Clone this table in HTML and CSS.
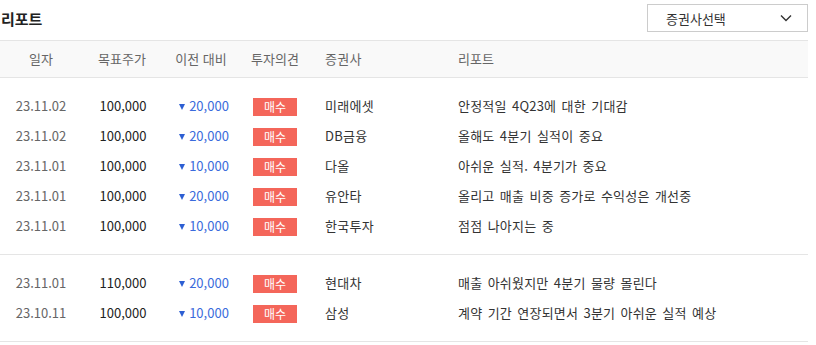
FILE: index.html
```html
<!DOCTYPE html>
<html lang="ko">
<head>
<meta charset="utf-8">
<title>리포트</title>
<link rel="stylesheet" href="styles.css">
</head>
<body>
<div class="report">
  <div class="top">
    <h2 class="title">리포트</h2>
    <div class="select">
      <span class="select-label">증권사선택</span>
      <svg class="chevron" width="12" height="8" viewBox="0 0 12 8"><path d="M1 1.5 L6 6.5 L11 1.5" fill="none" stroke="#333" stroke-width="1.4"/></svg>
    </div>
  </div>
  <div class="row head">
    <div class="c">일자</div>
    <div class="c">목표주가</div>
    <div class="c">이전 대비</div>
    <div class="c">투자의견</div>
    <div class="l broker">증권사</div>
    <div class="l">리포트</div>
  </div>
  <div class="group">
    <div class="row">
      <div class="c date">23.11.02</div><div class="c price">100,000</div>
      <div class="c chg"><span class="tri"></span>20,000</div><div class="c"><span class="badge">매수</span></div>
      <div class="l broker">미래에셋</div><div class="l text">안정적일 4Q23에 대한 기대감</div>
    </div>
    <div class="row">
      <div class="c date">23.11.02</div><div class="c price">100,000</div>
      <div class="c chg"><span class="tri"></span>20,000</div><div class="c"><span class="badge">매수</span></div>
      <div class="l broker">DB금융</div><div class="l text">올해도 4분기 실적이 중요</div>
    </div>
    <div class="row">
      <div class="c date">23.11.01</div><div class="c price">100,000</div>
      <div class="c chg"><span class="tri"></span>10,000</div><div class="c"><span class="badge">매수</span></div>
      <div class="l broker">다올</div><div class="l text">아쉬운 실적. 4분기가 중요</div>
    </div>
    <div class="row">
      <div class="c date">23.11.01</div><div class="c price">100,000</div>
      <div class="c chg"><span class="tri"></span>20,000</div><div class="c"><span class="badge">매수</span></div>
      <div class="l broker">유안타</div><div class="l text">올리고 매출 비중 증가로 수익성은 개선중</div>
    </div>
    <div class="row">
      <div class="c date">23.11.01</div><div class="c price">100,000</div>
      <div class="c chg"><span class="tri"></span>10,000</div><div class="c"><span class="badge">매수</span></div>
      <div class="l broker">한국투자</div><div class="l text">점점 나아지는 중</div>
    </div>
  </div>
  <div class="group">
    <div class="row">
      <div class="c date">23.11.01</div><div class="c price">110,000</div>
      <div class="c chg"><span class="tri"></span>20,000</div><div class="c"><span class="badge">매수</span></div>
      <div class="l broker">현대차</div><div class="l text">매출 아쉬웠지만 4분기 물량 몰린다</div>
    </div>
    <div class="row">
      <div class="c date">23.10.11</div><div class="c price">100,000</div>
      <div class="c chg"><span class="tri"></span>10,000</div><div class="c"><span class="badge">매수</span></div>
      <div class="l broker">삼성</div><div class="l text">계약 기간 연장되면서 3분기 아쉬운 실적 예상</div>
    </div>
  </div>
</div>
</body>
</html>
```
FILE: styles.css
```css
html, body {
  margin: 0;
  padding: 0;
  background: #fff;
}
body {
  font-family: "Noto Sans CJK KR", "Noto Sans", sans-serif;
  font-size: 13px;
  color: #333;
}
.report {
  width: 808px;
}
.top {
  display: flex;
  justify-content: space-between;
  align-items: center;
  height: 40px;
  box-sizing: border-box;
  padding-bottom: 4px;
}
.title {
  margin: 0;
  font-size: 15px;
  font-weight: 700;
  color: #222;
  line-height: 20px;
  padding-top: 2px;
  padding-left: 1px;
}
.select {
  width: 161px;
  height: 28px;
  box-sizing: border-box;
  border: 1px solid #ccc;
  display: flex;
  align-items: center;
  justify-content: space-between;
  padding: 0 15px 0 18px;
  font-size: 13px;
  color: #333;
}
.chevron {
  display: block;
}
.row {
  display: grid;
  grid-template-columns: 82px 80px 78px 70px 148px 1fr;
  align-items: center;
  height: 30px;
  line-height: 30px;
}
.row.head {
  height: 36px;
  line-height: 36px;
  background: #f9f9f9;
  border-top: 1px solid #e5e5e5;
  border-bottom: 1px solid #e5e5e5;
  color: #666;
}
.c {
  text-align: center;
}
.l {
  text-align: left;
}
.broker {
  padding-left: 15px;
  letter-spacing: 0.3px;
}
.group {
  padding: 13px 0;
  border-bottom: 1px solid #e5e5e5;
}
.date {
  color: #666;
}
.price {
  color: #222;
  padding-left: 2px;
}
.chg {
  color: #3a6bdc;
  display: flex;
  align-items: center;
  justify-content: center;
  padding-left: 6px;
}
.tri {
  width: 0;
  height: 0;
  border-left: 3.5px solid transparent;
  border-right: 3.5px solid transparent;
  border-top: 6px solid #2d5fd3;
  margin-right: 4px;
  margin-top: 1px;
}
.badge {
  display: inline-block;
  width: 44px;
  height: 18px;
  line-height: 18px;
  background: #f4665a;
  color: #fff;
  font-size: 12px;
  vertical-align: middle;
}
.text {
  color: #333;
  word-spacing: 1.5px;
  letter-spacing: 0.2px;
}
```
